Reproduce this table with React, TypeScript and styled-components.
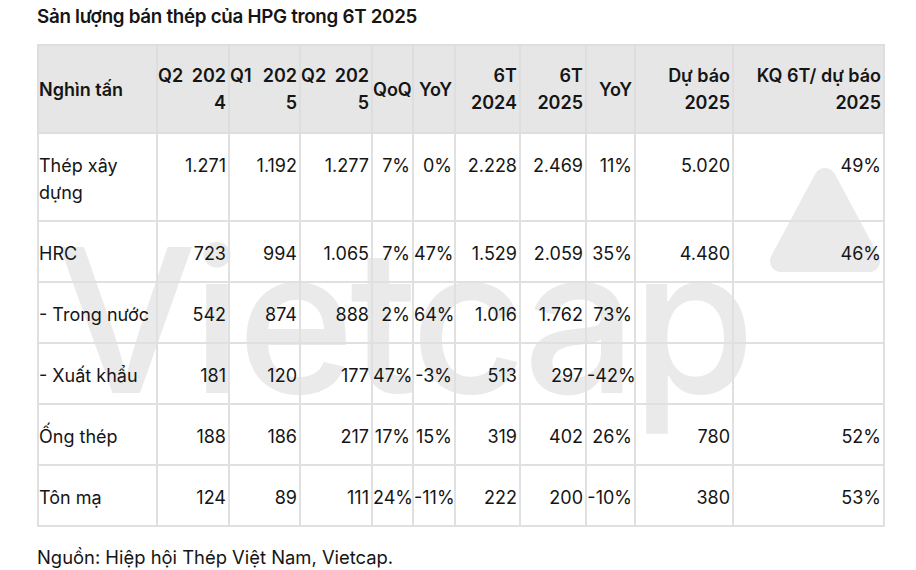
import React from "react";
import styled, { createGlobalStyle } from "styled-components";

const Global = createGlobalStyle`
  html, body { margin: 0; padding: 0; background: #ffffff; }
  body { font-family: Inter, "Noto Sans", "Liberation Sans", sans-serif; color: #151515; }
`;

const Page = styled.div`
  width: 916px;
  height: 570px;
  box-sizing: border-box;
  padding: 4px 0 0 37px;
  display: flex;
  flex-direction: column;
  overflow: hidden;
`;

const Title = styled.h1`
  margin: 0;
  font-size: 18.8px;
  line-height: 26px;
  font-weight: 600;
  letter-spacing: -0.3px;
`;

const TableWrap = styled.div`
  position: relative;
  margin-top: 14px;
  width: 846px;
`;

const Watermark = styled.div`
  position: absolute;
  left: 18px;
  top: 176px;
  font-size: 200px;
  line-height: 200px;
  font-weight: 500;
  color: #eaeaea;
  letter-spacing: -5px;
  white-space: nowrap;
  pointer-events: none;
  z-index: 0;
`;

const Logo = styled.svg`
  position: absolute;
  left: 731px;
  top: 121px;
  z-index: 0;
`;

const Table = styled.table`
  position: relative;
  z-index: 1;
  width: 846px;
  table-layout: fixed;
  border-collapse: collapse;
  font-size: 18px;
  line-height: 27px;
`;

const HeadCell = styled.th<{ $align: string }>`
  background: #e6e6e6;
  border: 2px solid #dedede;
  padding: 16px 2px 16px 0;
  font-weight: 600;
  text-align: ${(p) => p.$align};
  vertical-align: middle;
  white-space: nowrap;
`;

const SplitLine = styled.div`
  display: flex;
  justify-content: space-between;
`;

const Cell = styled.td<{ $align: string }>`
  border: 2px solid #e0e0e0;
  padding: 18px 2px 14px 0;
  font-weight: 400;
  text-align: ${(p) => p.$align};
  vertical-align: top;
  white-space: nowrap;
  background: transparent;
`;

const Source = styled.p`
  margin: 17px 0 0;
  font-size: 18.4px;
  line-height: 26px;
  font-weight: 400;
`;

const widths = [119, 72, 71, 72, 41, 42, 65, 66, 49, 98, 151];

type Head = { lines: (string | [string, string])[]; align: string };

const heads: Head[] = [
  { lines: ["Nghìn tấn"], align: "left" },
  { lines: [["Q2", "202"], "4"], align: "right" },
  { lines: [["Q1", "202"], "5"], align: "right" },
  { lines: [["Q2", "202"], "5"], align: "right" },
  { lines: ["QoQ"], align: "right" },
  { lines: ["YoY"], align: "right" },
  { lines: ["6T", "2024"], align: "right" },
  { lines: ["6T", "2025"], align: "right" },
  { lines: ["YoY"], align: "right" },
  { lines: ["Dự báo", "2025"], align: "right" },
  { lines: ["KQ 6T/ dự báo", "2025"], align: "right" },
];

const rows: { label: string[]; values: string[] }[] = [
  { label: ["Thép xây", "dựng"], values: ["1.271", "1.192", "1.277", "7%", "0%", "2.228", "2.469", "11%", "5.020", "49%"] },
  { label: ["HRC"], values: ["723", "994", "1.065", "7%", "47%", "1.529", "2.059", "35%", "4.480", "46%"] },
  { label: ["- Trong nước"], values: ["542", "874", "888", "2%", "64%", "1.016", "1.762", "73%", "", ""] },
  { label: ["- Xuất khẩu"], values: ["181", "120", "177", "47%", "-3%", "513", "297", "-42%", "", ""] },
  { label: ["Ống thép"], values: ["188", "186", "217", "17%", "15%", "319", "402", "26%", "780", "52%"] },
  { label: ["Tôn mạ"], values: ["124", "89", "111", "24%", "-11%", "222", "200", "-10%", "380", "53%"] },
];

export default function App() {
  return (
    <>
      <Global />
      <Page>
        <Title>Sản lượng bán thép của HPG trong 6T 2025</Title>
        <TableWrap>
          <Watermark>Vietcap</Watermark>
          <Logo width="114" height="112" viewBox="0 0 114 112">
            <polygon
              points="57,14 13,96 101,96"
              fill="#eaeaea"
              stroke="#eaeaea"
              strokeWidth="22"
              strokeLinejoin="round"
            />
          </Logo>
          <Table>
            <colgroup>
              {widths.map((w, i) => (
                <col key={i} style={{ width: w }} />
              ))}
            </colgroup>
            <thead>
              <tr>
                {heads.map((h, i) => (
                  <HeadCell key={i} $align={h.align}>
                    {h.lines.map((l, j) =>
                      Array.isArray(l) ? (
                        <SplitLine key={j}>
                          <span>{l[0]}</span>
                          <span>{l[1]}</span>
                        </SplitLine>
                      ) : (
                        <div key={j}>{l}</div>
                      )
                    )}
                  </HeadCell>
                ))}
              </tr>
            </thead>
            <tbody>
              {rows.map((r, i) => (
                <tr key={i}>
                  <Cell $align="left">
                    {r.label.map((l, j) => (
                      <div key={j}>{l}</div>
                    ))}
                  </Cell>
                  {r.values.map((v, j) => (
                    <Cell key={j} $align="right">
                      {v}
                    </Cell>
                  ))}
                </tr>
              ))}
            </tbody>
          </Table>
        </TableWrap>
        <Source>Nguồn: Hiệp hội Thép Việt Nam, Vietcap.</Source>
      </Page>
    </>
  );
}
